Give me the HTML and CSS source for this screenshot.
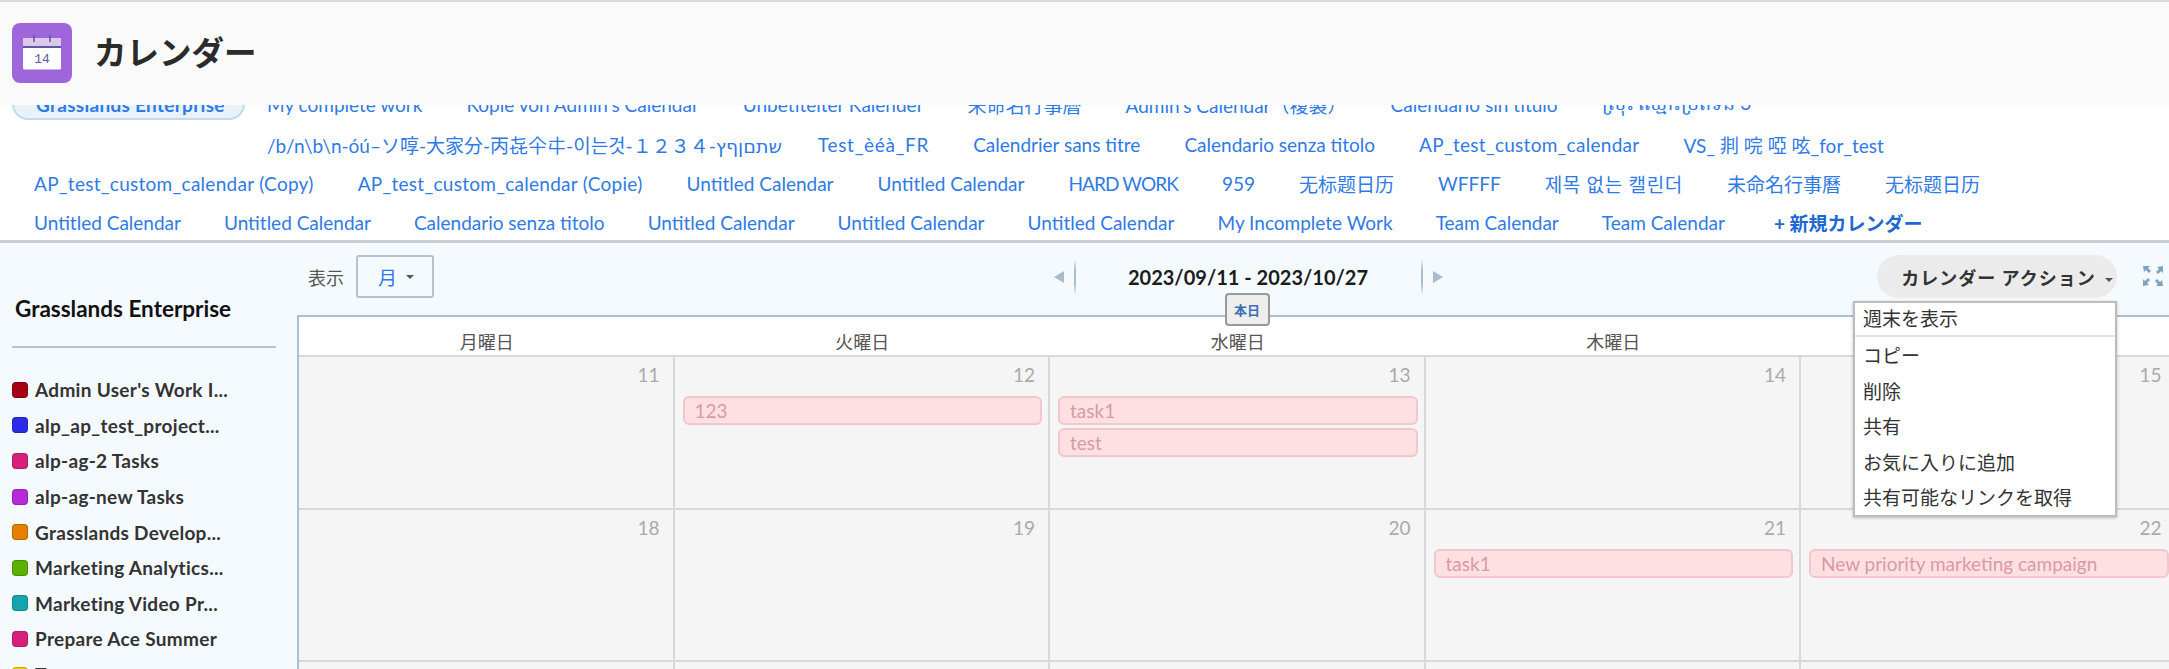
FILE: index.html
```html
<!DOCTYPE html>
<html lang="ja">
<head>
<meta charset="utf-8">
<title>カレンダー</title>
<link rel="stylesheet" href="styles.css">
</head>
<body>
<header class="page-head">
  <span class="app-icon">
    <svg width="60" height="60" viewBox="0 0 60 60">
      <rect x="11" y="15" width="38" height="8" fill="#dcc8ea"/>
      <rect x="11" y="23" width="38" height="2" fill="#5f5b9e"/>
      <path d="M11 25h38v20a1.500 1.500 0 0 1-1.500 1.500h-35A1.500 1.500 0 0 1 11 45z" fill="#fff"/>
      <path d="M22 12v7M38 12v7" stroke="#5f5b9e" stroke-width="1.500"/>
      <text x="30" y="40" text-anchor="middle" class="icon-num">14</text>
    </svg>
  </span>
  <h1 class="page-title">カレンダー</h1>
</header>

<nav class="tabs">
  <div class="tab-row">
    <a class="tab tab-active">Grasslands Enterprise</a>
    <a class="tab">My complete work</a>
    <a class="tab">Kopie von Admin's Calendar</a>
    <a class="tab">Unbetitelter Kalender</a>
    <a class="tab">未命名行事曆</a>
    <a class="tab">Admin's Calendar（複製）</a>
    <a class="tab">Calendario sin título</a>
    <a class="tab">ស្រុះ ឈ្មោះប្រតិទិន 3</a>
  </div>
  <div class="tab-row tab-row-indent">
    <a class="tab tab-long">/b/n\b\n-óú–ソ啍-大家分-丙㐂仐㐄-이는것-１２３４-שתםןףץ</a>
    <a class="tab tab-wide">Test_èéà_FR</a>
    <a class="tab">Calendrier sans titre</a>
    <a class="tab">Calendario senza titolo</a>
    <a class="tab tab-snake">AP_test_custom_calendar</a>
    <a class="tab">VS_ 剕 唍 啞 呟_for_test</a>
  </div>
  <div class="tab-row">
    <a class="tab tab-snake">AP_test_custom_calendar (Copy)</a>
    <a class="tab tab-snake">AP_test_custom_calendar (Copie)</a>
    <a class="tab">Untitled Calendar</a>
    <a class="tab">Untitled Calendar</a>
    <a class="tab tab-caps">HARD WORK</a>
    <a class="tab">959</a>
    <a class="tab">无标题日历</a>
    <a class="tab">WFFFF</a>
    <a class="tab tab-wide">제목 없는 캘린더</a>
    <a class="tab">未命名行事曆</a>
    <a class="tab">无标题日历</a>
  </div>
  <div class="tab-row tab-row-tight">
    <a class="tab">Untitled Calendar</a>
    <a class="tab">Untitled Calendar</a>
    <a class="tab">Calendario senza titolo</a>
    <a class="tab">Untitled Calendar</a>
    <a class="tab">Untitled Calendar</a>
    <a class="tab">Untitled Calendar</a>
    <a class="tab">My Incomplete Work</a>
    <a class="tab">Team Calendar</a>
    <a class="tab">Team Calendar</a>
    <a class="tab tab-new">+ 新規カレンダー</a>
  </div>
</nav>

<div class="workspace">
  <aside class="sidebar">
    <h2 class="side-title">Grasslands Enterprise</h2>
    <ul class="legend">
      <li class="legend-item"><i class="swatch sw-red"></i>Admin User's Work I...</li>
      <li class="legend-item"><i class="swatch sw-blue"></i>alp_ap_test_project...</li>
      <li class="legend-item"><i class="swatch sw-pink"></i>alp-ag-2 Tasks</li>
      <li class="legend-item"><i class="swatch sw-purple"></i>alp-ag-new Tasks</li>
      <li class="legend-item"><i class="swatch sw-orange"></i>Grasslands Develop...</li>
      <li class="legend-item"><i class="swatch sw-green"></i>Marketing Analytics...</li>
      <li class="legend-item"><i class="swatch sw-teal"></i>Marketing Video Pr...</li>
      <li class="legend-item"><i class="swatch sw-pink"></i>Prepare Ace Summer</li>
      <li class="legend-item"><i class="swatch sw-yellow"></i>T</li>
    </ul>
  </aside>

  <main class="main">
    <div class="toolbar">
      <div class="view-select">
        <span class="view-label">表示</span>
        <button class="view-btn">月<i class="caret"></i></button>
      </div>
      <div class="date-nav">
        <i class="arrow arrow-left"></i>
        <i class="nav-sep"></i>
        <span class="date-range">2023/09/11 - 2023/10/27</span>
        <i class="nav-sep"></i>
        <i class="arrow arrow-right"></i>
        <button class="today-btn">本日</button>
      </div>
      <div class="actions">
        <button class="action-btn">カレンダー アクション<i class="caret caret-dark"></i></button>
        <svg class="fs-icon" width="20" height="20" viewBox="0 0 20 20" fill="#7fa3bf">
          <path d="M0 0h7L5 2l3 3-2 2-3-3-2 2zM20 0v7l-2-2-3 3-2-2 3-3-2-2zM0 20v-7l2 2 3-3 2 2-3 3 2 2zM20 20h-7l2-2-3-3 2-2 3 3 2-2z"/>
        </svg>
        <ul class="menu">
          <li class="menu-item menu-item-sep">週末を表示</li>
          <li class="menu-item">コピー</li>
          <li class="menu-item">削除</li>
          <li class="menu-item">共有</li>
          <li class="menu-item">お気に入りに追加</li>
          <li class="menu-item">共有可能なリンクを取得</li>
        </ul>
      </div>
    </div>

    <section class="calendar">
      <div class="weekdays">
        <div class="weekday">月曜日</div>
        <div class="weekday">火曜日</div>
        <div class="weekday">水曜日</div>
        <div class="weekday">木曜日</div>
        <div class="weekday">金曜日</div>
      </div>
      <div class="week">
        <div class="day"><span class="num">11</span></div>
        <div class="day"><span class="num">12</span><div class="event">123</div></div>
        <div class="day"><span class="num">13</span><div class="event">task1</div><div class="event">test</div></div>
        <div class="day"><span class="num">14</span></div>
        <div class="day"><span class="num">15</span></div>
      </div>
      <div class="week">
        <div class="day"><span class="num">18</span></div>
        <div class="day"><span class="num">19</span></div>
        <div class="day"><span class="num">20</span></div>
        <div class="day"><span class="num">21</span><div class="event">task1</div></div>
        <div class="day"><span class="num">22</span><div class="event">New priority marketing campaign</div></div>
      </div>
      <div class="week">
        <div class="day"></div>
        <div class="day"></div>
        <div class="day"></div>
        <div class="day"></div>
        <div class="day"></div>
      </div>
    </section>
  </main>
</div>
</body>
</html>
```
FILE: styles.css
```css
* { box-sizing: border-box; }
html, body { height: 100%; }
body {
  margin: 0;
  overflow: hidden;
  background: #f5faff;
  color: #333;
  font-family: Lato, "Noto Sans CJK JP", "Noto Sans CJK KR", "DejaVu Sans", sans-serif;
  font-size: 18px;
}
ul { list-style: none; margin: 0; padding: 0; }
button { font-family: inherit; cursor: pointer; }

.page-head {
  position: relative;
  z-index: 2;
  height: 105px;
  display: flex;
  align-items: center;
  padding: 21px 0 22px 12px;
  background: #fafafa;
  border-top: 2px solid #d9d9d9;
}
.app-icon {
  width: 60px;
  height: 60px;
  background: #9f66dc;
  border-radius: 8px;
  flex: none;
}
.icon-num { font: 13px "Liberation Mono", monospace; fill: #5f5b9e; }
.page-title {
  margin: 0 0 0 22px;
  font-size: 32.500px;
  font-weight: 700;
  color: #2b2b2b;
  line-height: 1;
}

.tabs {
  height: 158px;
  margin-top: -20px;
  padding: 0 12px;
  background: #fff;
  border-bottom: 3px solid #c9ccd0;
}
.tab-row {
  display: flex;
  align-items: center;
  height: 39.400px;
  gap: 44px;
  padding-left: 22px;
  white-space: nowrap;
}
.tab-row-indent { padding-left: 255px; }
.tab-row-tight { gap: 43px; }
.tab { color: #2f7ae5; font-size: 19px; }
.tab-long { margin-right: -8px; }
.tab-wide { letter-spacing: .7px; }
.tab-snake { letter-spacing: .28px; }
.tab-caps { letter-spacing: -.9px; }
.tab-active {
  margin-left: -22px;
  margin-right: -22px;
  width: 233px;
  height: 30px;
  padding-left: 22px;
  display: flex;
  align-items: center;
  font-weight: 700;
  letter-spacing: .3px;
  background: #e8f2fb;
  border: 2px solid #c5d9ea;
  border-radius: 0 0 16px 16px;
}
.tab-new { margin-left: 6px; font-weight: 700; color: #1f68d0; }

.workspace { display: flex; height: 426px; overflow: hidden; }
.sidebar { width: 297px; flex: none; padding: 0 21px 0 12px; }
.side-title {
  margin: 0;
  padding: 51px 0 24px 3px;
  height: 105px;
  font-size: 22.500px;
  line-height: 30px;
  font-weight: 700;
  color: #111;
  white-space: nowrap;
  border-bottom: 2px solid #b4c6d6;
}
.legend { padding-top: 24px; }
.legend-item {
  display: flex;
  align-items: center;
  gap: 7px;
  height: 35.600px;
  font-size: 19px;
  letter-spacing: .3px;
  font-weight: 700;
  color: #333;
  white-space: nowrap;
}
.swatch { width: 16px; height: 16px; flex: none; border-radius: 4px; border: 1px solid rgba(0,0,0,.18); }
.sw-red { background: #a50014; }
.sw-blue { background: #2a2ae8; }
.sw-pink { background: #d6217a; }
.sw-purple { background: #b82ad8; }
.sw-orange { background: #e67e00; }
.sw-green { background: #5cb000; }
.sw-teal { background: #14a5ae; }
.sw-yellow { background: #f0d000; }

.main { flex: 1; min-width: 0; display: flex; flex-direction: column; }
.toolbar {
  height: 72px;
  flex: none;
  display: flex;
  justify-content: space-between;
  align-items: flex-start;
  padding: 12px 6px 0 11px;
}
.view-select { display: flex; align-items: center; gap: 12px; }
.view-label { color: #555; font-size: 18px; }
.view-btn {
  width: 78px;
  height: 43px;
  display: flex;
  align-items: center;
  justify-content: center;
  gap: 9px;
  background: transparent;
  border: 2px solid #b8c2cc;
  border-radius: 3px;
  color: #2f7ae5;
  font-size: 19px;
  padding: 0 0 0 2px;
}
.caret {
  width: 0;
  height: 0;
  border: 4.500px solid transparent;
  border-top-color: #555;
  border-bottom: 0;
}
.caret-dark { margin-left: 9px; margin-top: 6px; }

.date-nav {
  position: relative;
  margin-left: 185px;
  display: flex;
  align-items: center;
  height: 43px;
}
.arrow { width: 0; height: 0; border: 6px solid transparent; }
.arrow-left { border-right: 10px solid #a9bccc; border-left: 0; }
.arrow-right { border-left: 10px solid #a9bccc; border-right: 0; }
.nav-sep {
  width: 2px;
  height: 36px;
  margin: 0 10px;
  background: linear-gradient(#f5faff, #a9bccc 30%, #a9bccc 70%, #f5faff);
}
.date-range {
  width: 325px;
  text-align: center;
  font-size: 20px;
  font-weight: 700;
  color: #1c1c1c;
}
.today-btn {
  position: absolute;
  z-index: 1;
  left: 171px;
  top: 38px;
  width: 45px;
  height: 33px;
  padding: 0;
  background: #eee;
  border: 2px solid #999;
  border-radius: 4px;
  color: #3a6fb5;
  font-size: 13px;
  font-weight: 700;
}

.actions { position: relative; display: flex; align-items: flex-start; gap: 26px; }
.action-btn {
  width: 240px;
  height: 43px;
  display: flex;
  align-items: center;
  justify-content: center;
  background: #ebebeb;
  border: 0;
  border-radius: 22px;
  color: #333;
  font-size: 18px;
  font-weight: 700;
  letter-spacing: 1px;
  padding: 0 0 0 20px;
}
.fs-icon { margin-top: 11px; flex: none; }
.menu {
  position: absolute;
  z-index: 3;
  top: 46px;
  right: 46px;
  width: 264px;
  height: 216px;
  padding: 0 8px;
  background: #fff;
  border: 2px solid #bdbdbd;
  box-shadow: 0 1px 3px rgba(0,0,0,.25);
}
.menu-item {
  height: 35.500px;
  line-height: 35.500px;
  font-size: 19px;
  color: #333;
  white-space: nowrap;
}
.menu-item-sep {
  height: 34px;
  line-height: 32px;
  margin: 0 -8px 1px;
  padding-left: 8px;
  border-bottom: 2px solid #e3e3e3;
}

.calendar {
  flex: 1;
  min-height: 0;
  width: 1878px;
  overflow: hidden;
  background: #fff;
  border-left: 2px solid #a9c0d4;
  border-top: 2px solid #a9c0d4;
}
.weekdays {
  height: 38px;
  display: grid;
  grid-template-columns: repeat(5, 375.500px);
  border-bottom: 2px solid #d8d8d8;
  box-sizing: content-box;
}
.weekday {
  text-align: center;
  font-size: 18px;
  line-height: 26px;
  padding-top: 12px;
  color: #555;
}
.week {
  height: 152.500px;
  display: grid;
  grid-template-columns: repeat(5, 375.500px);
  border-bottom: 2px solid #d8d8d8;
}
.day {
  background: #f5f5f5;
  border-right: 2px solid #d8d8d8;
  padding: 6px 6px 0 8px;
  display: flex;
  flex-direction: column;
  gap: 3px;
}
.num {
  align-self: flex-end;
  height: 30px;
  padding-right: 7px;
  color: #aaa;
  font-size: 19px;
  line-height: 24px;
}
.event {
  height: 29px;
  padding: 0 10px;
  line-height: 25px;
  background: #ffe0e2;
  border: 2px solid #f3c6cb;
  border-radius: 6px;
  color: #d99aa4;
  font-size: 19px;
  white-space: nowrap;
  overflow: hidden;
}
```
